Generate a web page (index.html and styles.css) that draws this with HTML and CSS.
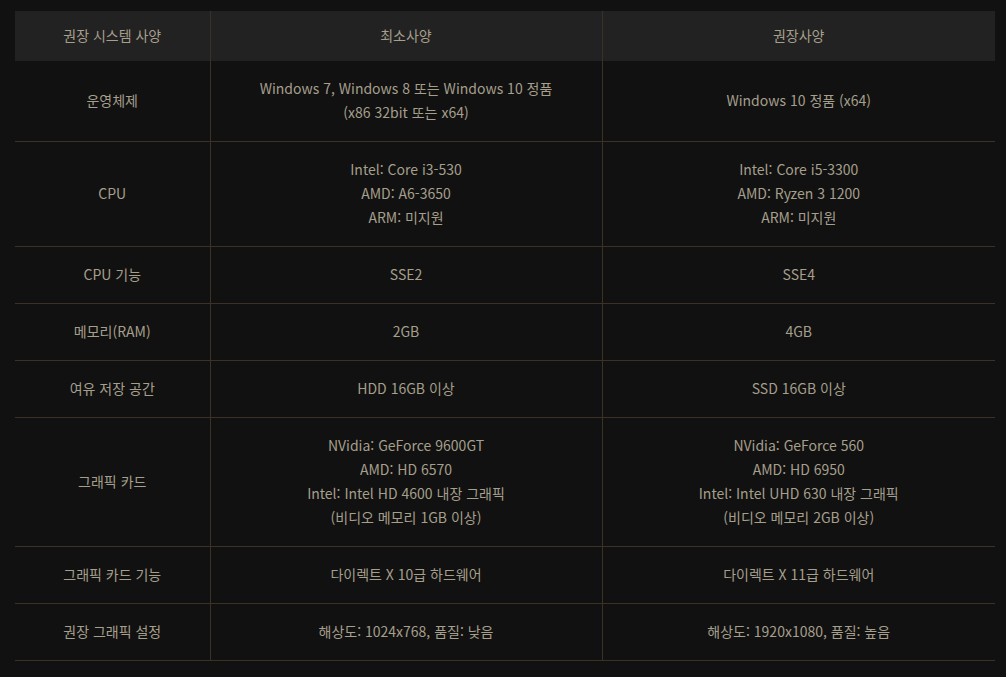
FILE: index.html
```html
<!DOCTYPE html>
<html lang="ko">
<head>
<meta charset="utf-8">
<title>권장 시스템 사양</title>
<link rel="stylesheet" href="styles.css">
</head>
<body>
<div class="wrap">
<table class="spec">
  <colgroup>
    <col class="c1"><col class="c2"><col class="c3">
  </colgroup>
  <thead>
    <tr><th>권장 시스템 사양</th><th>최소사양</th><th>권장사양</th></tr>
  </thead>
  <tbody>
    <tr><td>운영체제</td><td>Windows 7, Windows 8 또는 Windows 10 정품<br>(x86 32bit 또는 x64)</td><td>Windows 10 정품 (x64)</td></tr>
    <tr><td>CPU</td><td>Intel: Core i3-530<br>AMD: A6-3650<br>ARM: 미지원</td><td>Intel: Core i5-3300<br>AMD: Ryzen 3 1200<br>ARM: 미지원</td></tr>
    <tr><td>CPU 기능</td><td>SSE2</td><td>SSE4</td></tr>
    <tr><td>메모리(RAM)</td><td>2GB</td><td>4GB</td></tr>
    <tr><td>여유 저장 공간</td><td>HDD 16GB 이상</td><td>SSD 16GB 이상</td></tr>
    <tr><td>그래픽 카드</td><td>NVidia: GeForce 9600GT<br>AMD: HD 6570<br>Intel: Intel HD 4600 내장 그래픽<br>(비디오 메모리 1GB 이상)</td><td>NVidia: GeForce 560<br>AMD: HD 6950<br>Intel: Intel UHD 630 내장 그래픽<br>(비디오 메모리 2GB 이상)</td></tr>
    <tr><td>그래픽 카드 기능</td><td>다이렉트 X 10급 하드웨어</td><td>다이렉트 X 11급 하드웨어</td></tr>
    <tr><td>권장 그래픽 설정</td><td>해상도: 1024x768, 품질: 낮음</td><td>해상도: 1920x1080, 품질: 높음</td></tr>
  </tbody>
</table>
</div>
</body>
</html>
```
FILE: styles.css
```css
html, body {
  margin: 0;
  padding: 0;
  background: #111111;
}
body {
  font-family: "Noto Sans CJK KR", "Noto Sans", sans-serif;
  font-size: 14px;
  color: #a59f8c;
}
.wrap {
  padding: 11px 11px 16px 15px;
}
.spec {
  width: 980px;
  border-collapse: collapse;
  table-layout: fixed;
}
.c1 { width: 195px; }
.c2 { width: 392px; }
.c3 { width: 393px; }
.spec th,
.spec td {
  text-align: center;
  vertical-align: middle;
  line-height: 24px;
  font-weight: normal;
}
.spec th {
  background: #222222;
  height: 50px;
  box-sizing: border-box;
  padding: 12px 0 14px;
}
.spec td {
  padding: 15px 0 17px;
  border-bottom: 1px solid #3b3124;
}
.spec th + th,
.spec td + td {
  border-left: 1px solid #3b3124;
}
```
